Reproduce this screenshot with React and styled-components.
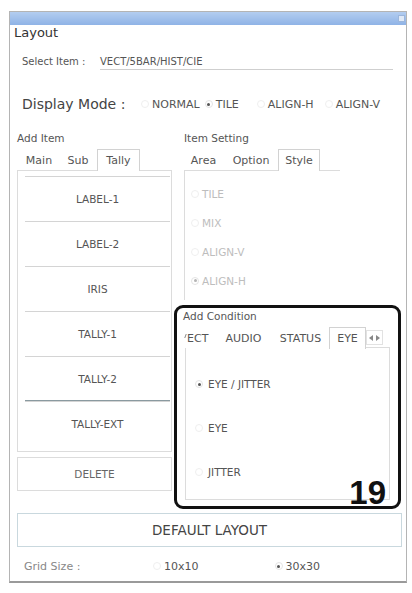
import React from "react";
import styled, { createGlobalStyle } from "styled-components";

const Global = createGlobalStyle`
  html, body { margin: 0; padding: 0; background: #fff; }
  body { font-family: "DejaVu Sans", "Liberation Sans", sans-serif; color: #555; }
  * { box-sizing: border-box; }
`;

const Window = styled.div`
  margin: 11px 0 0 9px;
  width: 398px;
  height: 572px;
  border: 1px solid #b4b4b4;
  border-bottom: 2px solid #9a9a9a;
  background: #fff;
  display: flex;
  flex-direction: column;
`;

const TitleBar = styled.div`
  height: 13px;
  background: linear-gradient(#b3cdf0, #8fb3e6);
  display: flex;
  justify-content: flex-end;
  align-items: center;
  padding-right: 1px;
`;

const CloseBox = styled.div`
  width: 7px;
  height: 7px;
  background: #dfe9f7;
  border: 1px solid #9bb6dc;
`;

const Content = styled.div`
  flex: 1;
  display: flex;
  flex-direction: column;
  padding: 0 4px 0 4px;
`;

const Heading = styled.div`
  margin-top: 1px;
  font-size: 13px;
  line-height: 14px;
  color: #333;
`;

const SelectRow = styled.div`
  margin: 15px 9px 0 8px;
  display: flex;
  font-size: 10px;
  line-height: 14px;
  color: #555;
`;

const SelectLabel = styled.span`
  width: 78px;
  border-bottom: 1px solid transparent;
`;

const SelectValue = styled.span`
  flex: 1;
  border-bottom: 1px solid #cfcfcf;
`;

const ModeRow = styled.div`
  margin: 24px 0 0 8px;
  display: flex;
  align-items: center;
  height: 20px;
`;

const ModeLabel = styled.span`
  font-size: 14px;
  color: #444;
  width: 119px;
`;

const Option = styled.label`
  display: flex;
  align-items: center;
  gap: ${(p) => p.$gap ?? 3}px;
  margin-left: ${(p) => p.$ml ?? 0}px;
  font-size: ${(p) => p.$size ?? 11}px;
  color: ${(p) => (p.$dim ? "#bdbdbd" : "#555")};
  white-space: nowrap;
`;

const Radio = styled.span`
  width: 8px;
  height: 8px;
  border-radius: 50%;
  border: 1px solid ${(p) => (p.$on ? "#e4e4e4" : "#efefef")};
  display: flex;
  align-items: center;
  justify-content: center;
  &::after {
    content: "";
    width: 3px;
    height: 3px;
    border-radius: 50%;
    background: ${(p) => (p.$dim ? "#b5b5b5" : "#555")};
    display: ${(p) => (p.$on ? "block" : "none")};
  }
`;

const Columns = styled.div`
  margin: 18px 0 0 3px;
  display: grid;
  grid-template-columns: 155px 228px;
  column-gap: 2px;
`;

const Column = styled.div`
  display: flex;
  flex-direction: column;
`;

const SectionLabel = styled.div`
  font-size: 10.5px;
  line-height: 12px;
  color: #555;
  padding-left: ${(p) => p.$pl ?? 0}px;
`;

const TabRow = styled.div`
  margin: 5px 0 0 ${(p) => p.$ml ?? 0}px;
  display: flex;
  height: 21px;
  position: relative;
  z-index: 1;
`;

const Tab = styled.div`
  width: ${(p) => p.$w}px;
  height: ${(p) => (p.$active ? 22 : 21)}px;
  display: flex;
  align-items: center;
  justify-content: ${(p) => (p.$left ? "flex-start" : "center")};
  padding-left: ${(p) => (p.$left ? 3 : 0)}px;
  font-size: 11px;
  color: #555;
  background: #fff;
  border: 1px solid ${(p) => (p.$active ? "#d2d2d2" : "transparent")};
  border-bottom: none;
  flex-shrink: 0;
  position: relative;
`;

const Sliver = styled.span`
  position: absolute;
  left: 1px;
  top: 6px;
  width: 1px;
  height: 4px;
  background: #888;
  transform: skewX(-20deg);
`;

const ListPanel = styled.div`
  border: 1px solid #dcdcdc;
  padding: 5px 1px 5px 7px;
  height: 282px;
  display: flex;
  flex-direction: column;
`;

const ListItem = styled.div`
  height: 45px;
  flex-shrink: 0;
  border-top: 1px solid #d4d4d4;
  border-bottom: ${(p) => (p.$selected ? "1px solid #8a9aa0" : "none")};
  display: flex;
  align-items: center;
  justify-content: center;
  font-size: 10.5px;
  color: #555;
`;

const DeleteBox = styled.div`
  margin-top: 5px;
  height: 34px;
  border: 1px solid #dcdcdc;
  display: flex;
  align-items: center;
  justify-content: center;
  font-size: 10.5px;
  color: #666;
`;

const StylePanel = styled.div`
  margin-left: 10px;
  width: 156px;
  height: 130px;
  border-top: 1px solid #dcdcdc;
  border-left: 1px solid #dcdcdc;
  padding: 8px 0 0 6px;
  display: flex;
  flex-direction: column;
`;

const StyleItem = styled.div`
  height: 29px;
  display: flex;
  align-items: center;
`;

const Callout = styled.div`
  position: relative;
  margin-top: 5px;
  width: 227px;
  height: 204px;
  border: 3px solid #111;
  border-radius: 9px;
  display: flex;
  flex-direction: column;
`;

const CondLabel = styled.div`
  margin: 2px 0 0 6px;
  font-size: 10.5px;
  line-height: 12px;
  color: #555;
`;

const CondTabs = styled.div`
  margin: 5px 0 0 6px;
  display: flex;
  height: 20px;
  position: relative;
  z-index: 1;
`;

const Arrows = styled.div`
  margin-top: 3px;
  width: 17px;
  height: 15px;
  border: 1px solid #e2e2e2;
  display: flex;
  align-items: center;
  justify-content: space-evenly;
`;

const CondPanel = styled.div`
  margin: 0 8px 6px 8px;
  flex: 1;
  border: 1px solid #dcdcdc;
  padding: 14px 0 0 9px;
  display: flex;
  flex-direction: column;
`;

const CondItem = styled.div`
  height: 44px;
  display: flex;
  align-items: center;
`;

const Badge = styled.div`
  position: absolute;
  right: 12px;
  bottom: -3px;
  font-family: "Liberation Sans", Arial, sans-serif;
  font-size: 33px;
  font-weight: bold;
  color: #111;
  line-height: 33px;
`;

const DefaultButton = styled.div`
  margin: 4px 0 0 3px;
  height: 34px;
  border: 1px solid #c9d8de;
  display: flex;
  align-items: center;
  justify-content: center;
  font-size: 13.5px;
  color: #444;
`;

const GridRow = styled.div`
  margin: 12px 0 0 10px;
  display: flex;
  align-items: center;
  height: 14px;
  font-size: 11px;
`;

const GridLabel = styled.span`
  width: 129px;
  color: #888;
`;

const Tri = ({ dir }) => (
  <svg width="4" height="6" viewBox="0 0 4 6">
    <path d={dir === "l" ? "M4 0 L0 3 L4 6 Z" : "M0 0 L4 3 L0 6 Z"} fill="#888" />
  </svg>
);

const items = ["LABEL-1", "LABEL-2", "IRIS", "TALLY-1", "TALLY-2", "TALLY-EXT"];

export default function App() {
  return (
    <>
      <Global />
      <Window>
        <TitleBar>
          <CloseBox />
        </TitleBar>
        <Content>
          <Heading>Layout</Heading>
          <SelectRow>
            <SelectLabel>Select Item :</SelectLabel>
            <SelectValue>VECT/5BAR/HIST/CIE</SelectValue>
          </SelectRow>
          <ModeRow>
            <ModeLabel>Display Mode :</ModeLabel>
            <Option $ml={0}><Radio />NORMAL</Option>
            <Option $ml={5}><Radio $on />TILE</Option>
            <Option $ml={18}><Radio />ALIGN-H</Option>
            <Option $ml={11}><Radio />ALIGN-V</Option>
          </ModeRow>
          <Columns>
            <Column>
              <SectionLabel>Add Item</SectionLabel>
              <TabRow $ml={2}>
                <Tab $w={40}>Main</Tab>
                <Tab $w={38}>Sub</Tab>
                <Tab $w={43} $active>Tally</Tab>
              </TabRow>
              <ListPanel>
                {items.map((it) => (
                  <ListItem key={it} $selected={it === "TALLY-2"}>{it}</ListItem>
                ))}
              </ListPanel>
              <DeleteBox>DELETE</DeleteBox>
            </Column>
            <Column>
              <SectionLabel $pl={10}>Item Setting</SectionLabel>
              <TabRow $ml={9}>
                <Tab $w={41}>Area</Tab>
                <Tab $w={54}>Option</Tab>
                <Tab $w={42} $active>Style</Tab>
              </TabRow>
              <StylePanel>
                <StyleItem><Option $dim $size={10.5}><Radio $dim />TILE</Option></StyleItem>
                <StyleItem><Option $dim $size={10.5}><Radio $dim />MIX</Option></StyleItem>
                <StyleItem><Option $dim $size={10.5}><Radio $dim />ALIGN-V</Option></StyleItem>
                <StyleItem><Option $dim $size={10.5}><Radio $dim $on />ALIGN-H</Option></StyleItem>
              </StylePanel>
              <Callout>
                <CondLabel>Add Condition</CondLabel>
                <CondTabs>
                  <Tab $w={32} $left><Sliver />ECT</Tab>
                  <Tab $w={57}>AUDIO</Tab>
                  <Tab $w={57}>STATUS</Tab>
                  <Tab $w={37} $active>EYE</Tab>
                  <Arrows>
                    <Tri dir="l" />
                    <Tri dir="r" />
                  </Arrows>
                </CondTabs>
                <CondPanel>
                  <CondItem><Option $size={10.5} $gap={5}><Radio $on />EYE / JITTER</Option></CondItem>
                  <CondItem><Option $size={10.5} $gap={5}><Radio />EYE</Option></CondItem>
                  <CondItem><Option $size={10.5} $gap={5}><Radio />JITTER</Option></CondItem>
                </CondPanel>
                <Badge>19</Badge>
              </Callout>
            </Column>
          </Columns>
          <DefaultButton>DEFAULT LAYOUT</DefaultButton>
          <GridRow>
            <GridLabel>Grid Size :</GridLabel>
            <Option><Radio />10x10</Option>
            <Option $ml={76}><Radio $on />30x30</Option>
          </GridRow>
        </Content>
      </Window>
    </>
  );
}
